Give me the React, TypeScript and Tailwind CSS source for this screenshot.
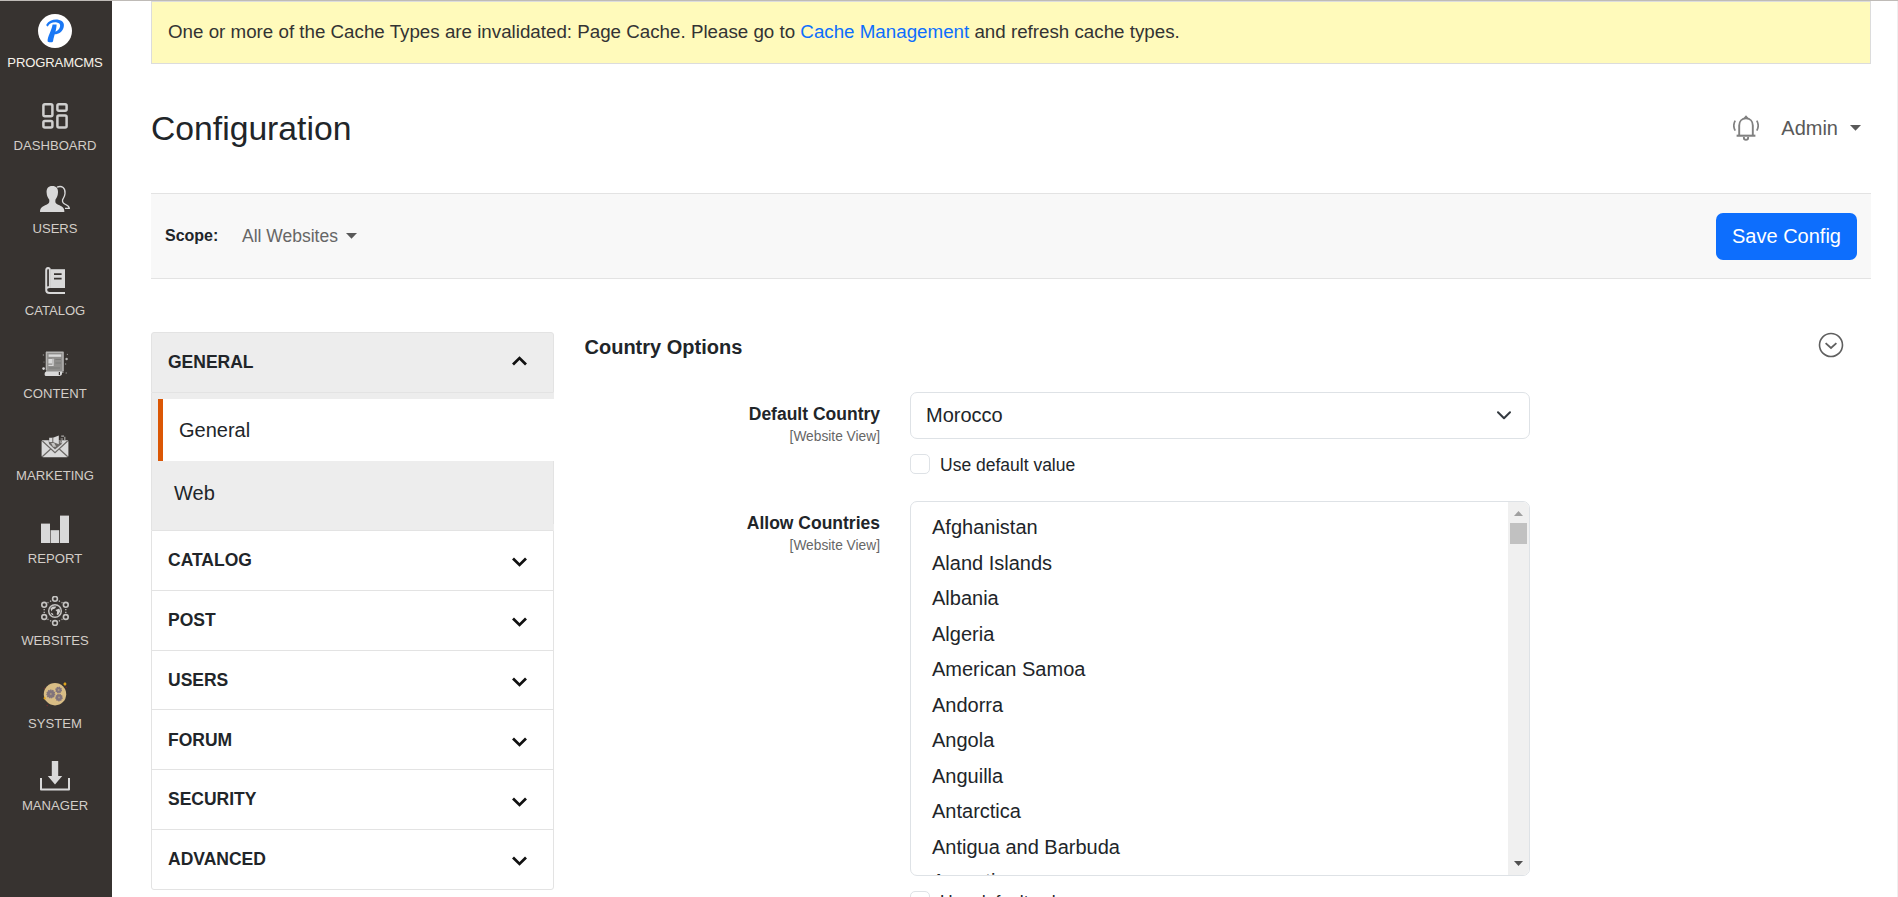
import type { ReactNode } from "react";

const ICON = "#d9d9d9";
const BAR = "#373330";

function Logo() {
  return (
    <svg width="34" height="34" viewBox="0 0 34 34">
      <circle cx="17" cy="17" r="17" fill="#fff" />
      <path
        d="M14.6 10.4H18.6C18.6 15.4 16.4 20 15 27.4C14.8 28.4 10 28.8 9.6 27.2C9.4 22.4 13.6 16.6 14.6 10.4Z"
        fill="#1a78f5"
      />
      <path
        d="M8.4 10.6C10.6 6.6 15.8 5 20.4 5.7C25 6.4 26.8 9.6 25.6 13.4C24.4 17.6 20.4 20.6 15.8 20.2L16.2 17.8C19.4 17.4 21.4 15.4 22 12.8C22.6 10.2 21.4 8.6 18.8 8.4C15 8 11.6 9 9.8 12.4C9 12.4 8 11.6 8.4 10.6Z"
        fill="#1a78f5"
      />
    </svg>
  );
}

function DashboardIcon() {
  return (
    <svg width="30" height="30" viewBox="0 0 30 30" fill="none" stroke="#cfcfce" strokeWidth="2.5">
      <rect x="3.4" y="3.2" width="9" height="12" rx="1.5" />
      <rect x="17.4" y="3.2" width="9.2" height="6.6" rx="1.5" />
      <rect x="3.4" y="20" width="9" height="6.6" rx="1.5" />
      <rect x="17.4" y="14.6" width="9.2" height="12" rx="1.5" />
    </svg>
  );
}

function UsersIcon() {
  return (
    <svg width="30" height="30" viewBox="0 0 30 30">
      <path
        d="M17 3.2C22 1 25.6 4.3 25 9.6C24.8 12.5 23.4 14.2 22.6 15.6C22 18.2 22.6 19 25 20.2C27.5 21.3 29.2 22 29.3 24.3H25"
        fill="none"
        stroke={ICON}
        strokeWidth="1.3"
      />
      <path
        d="M12.3 2C16.4 2 18.3 4.6 18 8.6C17.8 12.2 16.6 14 15.5 15.6C15.1 18.6 15.5 19.6 18.2 20.8C22 22.4 24.3 23.3 24.4 28H0C.1 23.3 2.8 22.4 6.4 20.8C9.2 19.6 9.6 18.6 9.2 15.6C8 14 6.8 12.2 6.6 8.6C6.3 4.6 8.2 2 12.3 2Z"
        fill={ICON}
      />
    </svg>
  );
}

function CatalogIcon() {
  return (
    <svg width="30" height="30" viewBox="0 0 30 30">
      <path
        d="M6.2 23.5V4.6C6.2 1.2 9.9 1.2 9.9 4.2V21C7.4 21 6.2 22.2 6.2 24C6.2 26 7.4 27.1 9.6 27.1H25"
        fill="none"
        stroke={ICON}
        strokeWidth="2"
      />
      <rect x="10.6" y="3.2" width="14.4" height="18.8" fill={ICON} />
      <path d="M14 8.2H21.6M14 12.6H21.6" stroke={BAR} strokeWidth="1.8" />
    </svg>
  );
}

function ContentIcon() {
  return (
    <svg width="30" height="30" viewBox="0 0 30 30">
      <rect x="6" y="3" width="17.5" height="21" fill="#8f8e8c" />
      <path d="M6.4 3V21M23 3V22M6 3.2H23.5" stroke="#b4b3b1" strokeWidth="1.4" />
      <rect x="8.6" y="5.4" width="12.6" height="2.4" fill={ICON} />
      <rect x="8.4" y="10" width="3.6" height="4.5" fill={ICON} />
      <path d="M13 9.8V16.4H8.4" fill="none" stroke={ICON} strokeWidth="1.3" />
      <path d="M15.4 10.5H21M15.4 14H21M9 19H20" stroke="#7b7a78" strokeWidth="1.2" />
      <path d="M4.6 25.2C4.6 23 5.6 22.6 7.6 22.6H22V24.6C22 26.6 20.4 27 19 27H6.2C5.2 27 4.6 26.4 4.6 25.2Z" fill={ICON} />
      <path d="M19.4 23V26" stroke={BAR} strokeWidth="1.2" />
      <circle cx="3.6" cy="19.6" r="1.3" fill={ICON} />
      <circle cx="26.6" cy="10" r="1.2" fill="#b5b4b2" />
      <circle cx="3.4" cy="6" r=".7" fill="#8f8e8c" />
      <circle cx="4" cy="13" r=".6" fill="#8f8e8c" />
      <circle cx="27.4" cy="5.4" r=".6" fill="#8f8e8c" />
      <circle cx="25.6" cy="15" r=".7" fill="#8f8e8c" />
      <circle cx="26.2" cy="24" r=".7" fill="#8f8e8c" />
    </svg>
  );
}

function MarketingIcon() {
  return (
    <svg width="30" height="30" viewBox="0 0 30 30">
      <rect x="1.6" y="9.3" width="26.8" height="16.9" rx="1.4" fill={ICON} />
      <path
        d="M2.4 10L15 21.6L27.6 10M2.2 25.8L11 17.8M27.8 25.8L19 17.8"
        fill="none"
        stroke="#6b6865"
        strokeWidth="1.2"
      />
      <path d="M8.6 9.2H21.8V13L15 18.4L9 13Z" fill="#6b6865" />
      <path d="M9.2 6.8H13L18.8 4.4V13.2L13 10.9H9.2Z" fill={ICON} />
      <path d="M12.8 7V11" stroke="#5d5a57" strokeWidth=".9" />
      <path d="M11.2 12H14.2L16.2 15.8H13Z" fill="#c4c3c1" />
      <path d="M21.2 5.2H24M20.6 8H23M24.8 5.8V9.2M19.8 10.6L22.4 12" stroke="#a9a8a6" strokeWidth="1.2" />
    </svg>
  );
}

function ReportIcon() {
  return (
    <svg width="30" height="30" viewBox="0 0 30 30" fill={ICON}>
      <rect x="1" y="9.6" width="9" height="19.4" />
      <rect x="10.6" y="16.2" width="8.6" height="12.8" />
      <rect x="20" y="1.6" width="9" height="27.4" />
    </svg>
  );
}

const HUB_NODES = [
  [15, 2.8],
  [25.8, 8.8],
  [25.8, 21],
  [15, 27],
  [4.2, 21],
  [4.2, 8.8],
];

function WebsitesIcon() {
  return (
    <svg width="30" height="30" viewBox="0 0 30 30" fill="none" stroke="#c4c3c1">
      <circle cx="15" cy="15" r="6.3" strokeWidth="1.5" />
      <path
        d="M10.4 12.6L12.6 10.4L16.4 10.6L15 12.6L12.4 13.4L11.6 15.4ZM15.4 14L19.4 12.4L20.2 15.6L18 19.2L16.6 18.2L17.2 15.8ZM10.6 16.6L12.8 17.4L13.6 19.6L11.8 18.8Z"
        fill="#d0cfcd"
        stroke="none"
      />
      {HUB_NODES.map(([x, y]) => (
        <circle key={`${x}-${y}`} cx={x} cy={y} r="2.4" strokeWidth="1.6" />
      ))}
      <path
        d="M18.8 4.8L20 5.5M21.6 6.4L22.4 6.9M11.2 4.8L10 5.5M8.4 6.4L7.6 6.9M18.8 25.2L20 24.5M21.6 23.6L22.4 23.1M11.2 25.2L10 24.5M8.4 23.6L7.6 23.1M4.2 13V14.2M4.2 15.8V17M25.8 13V14.2M25.8 15.8V17"
        strokeWidth="1.3"
      />
    </svg>
  );
}

function Cog({ x, y, r }: { x: number; y: number; r: number }) {
  return (
    <g>
      <circle cx={x} cy={y} r={r} fill="#81747c" stroke="#81747c" strokeWidth="1.4" strokeDasharray="1.3 .8" />
      <circle cx={x} cy={y} r="1" fill="#a9977f" />
    </g>
  );
}

function SystemIcon() {
  return (
    <svg width="30" height="30" viewBox="0 0 30 30">
      <circle cx="15" cy="15.2" r="11.2" fill="#d8bd85" />
      <Cog x={10.8} y={15} r={3.8} />
      <Cog x={18.6} y={11} r={2.7} />
      <Cog x={19} y={18.6} r={3.1} />
      <path d="M25 3L26.6 5L25 7L23.2 5Z" fill="#e0a41c" />
      <path d="M4.6 17.6L6 19.2L4.6 20.8L3.4 19.2Z" fill="#e0a41c" />
      <circle cx="26.2" cy="8.2" r=".8" fill="#6b2f2f" />
      <circle cx="7.2" cy="26.6" r=".8" fill="#6b2f2f" />
      <circle cx="4.4" cy="9.2" r=".7" fill="#6b2f2f" />
    </svg>
  );
}

function ManagerIcon() {
  return (
    <svg width="30" height="30" viewBox="0 0 30 30">
      <path d="M11.8 0H18.2V15H22.2L15 23.6L7.8 15H11.8Z" fill={ICON} />
      <path d="M1 17V28.4H29V17" fill="none" stroke={ICON} strokeWidth="2" strokeLinejoin="round" />
    </svg>
  );
}

const NAV: { label: string; icon: ReactNode }[] = [
  { label: "DASHBOARD", icon: <DashboardIcon /> },
  { label: "USERS", icon: <UsersIcon /> },
  { label: "CATALOG", icon: <CatalogIcon /> },
  { label: "CONTENT", icon: <ContentIcon /> },
  { label: "MARKETING", icon: <MarketingIcon /> },
  { label: "REPORT", icon: <ReportIcon /> },
  { label: "WEBSITES", icon: <WebsitesIcon /> },
  { label: "SYSTEM", icon: <SystemIcon /> },
  { label: "MANAGER", icon: <ManagerIcon /> },
];

function Sidebar() {
  return (
    <nav className="flex w-[112px] shrink-0 flex-col bg-[#373330] pr-0.5 text-[13.1px] text-[#d3cec8]">
      <a className="flex h-[85px] flex-col items-center pt-[13px] text-[#f7f3eb]">
        <Logo />
        <span className="mt-[5px] leading-5 tracking-[-0.15px]">PROGRAMCMS</span>
      </a>
      {NAV.map(({ label, icon }) => (
        <a key={label} className="flex h-[82.5px] flex-col items-center pt-[15px]">
          {icon}
          <span className="mt-[5px] leading-5">{label}</span>
        </a>
      ))}
    </nav>
  );
}

function Chevron({ up = false }: { up?: boolean }) {
  return (
    <svg width="15" height="10" viewBox="0 0 15 10" className={up ? "-mt-[3px]" : "mt-1"}>
      <path
        d={up ? "M1 8.4L7.5 2.1L14 8.4" : "M1 1.6L7.5 7.9L14 1.6"}
        fill="none"
        stroke="#111"
        strokeWidth="2.8"
      />
    </svg>
  );
}

function Caret() {
  return (
    <svg width="11" height="6" viewBox="0 0 11 6" fill="#595959">
      <path d="M0 0H11L5.5 5.8Z" />
    </svg>
  );
}

function Bell() {
  return (
    <svg width="26" height="26" viewBox="0 0 26 26" fill="none" stroke="#808080" strokeWidth="1.9" className="mt-px">
      <path d="M6.2 20.6V10.6C6.2 6.2 9 3.4 13 3.4C17 3.4 19.8 6.2 19.8 10.6V20.6" />
      <path d="M3.6 20.7H22.4" strokeWidth="2.1" />
      <path d="M10.9 22V23C10.9 25.4 15.1 25.4 15.1 23V22" />
      <path d="M11 3.4L13 1.2L15 3.4Z" fill="#808080" strokeWidth="1.2" />
      <path d="M2.2 5.6C.5 8.6 .5 12.6 2.2 15.6M23.8 5.6C25.5 8.6 25.5 12.6 23.8 15.6" strokeWidth="1.7" />
    </svg>
  );
}

const SECTIONS = ["CATALOG", "POST", "USERS", "FORUM", "SECURITY", "ADVANCED"];

function ConfigMenu() {
  return (
    <aside className="w-[403px] shrink-0 text-[#212529]">
      <div className="flex h-[61px] items-center justify-between rounded-t-[3px] border border-[#e3e3e3] bg-[#ededed] pl-4 pr-[26.5px] text-[17.5px] font-bold">
        GENERAL
        <Chevron up />
      </div>
      <div className="h-[137px] border-l border-[#e3e3e3] bg-[#ededed] pl-1.5 pt-1.5 text-xl">
        <div className="flex h-[62px] items-center border-l-[5px] border-[#db5705] bg-white pl-4">General</div>
        <div className="flex h-[63px] items-center border-r border-[#e3e3e3] pl-4">Web</div>
      </div>
      <div className="rounded-b-[3px] border border-[#e3e3e3]">
        {SECTIONS.map((name, i) => (
          <div
            key={name}
            className={
              "flex items-center justify-between pl-4 pr-[26.5px] text-[17.5px] font-bold " +
              (i < SECTIONS.length - 1 ? "h-[59.8px] border-b border-[#e3e3e3]" : "h-[59px]")
            }
          >
            {name}
            <Chevron />
          </div>
        ))}
      </div>
    </aside>
  );
}

function Field({ label, className, children }: { label: string; className: string; children: ReactNode }) {
  return (
    <div className={"flex gap-[30px] " + className}>
      <div className="w-[295px] pt-[11px] text-right">
        <div className="text-[17.5px] leading-[22px] font-bold">{label}</div>
        <div className="text-[13.75px] leading-6 text-[#666]">[Website View]</div>
      </div>
      <div className="w-[620px]">
        {children}
        <label className="mt-[15px] flex h-5 items-center gap-[10px] text-[17.5px] leading-[22px] whitespace-nowrap">
          <span className="size-5 rounded-[5px] border border-[#dee2e6]" />
          <span className="pt-px">Use default value</span>
        </label>
      </div>
    </div>
  );
}

const COUNTRIES = [
  "Afghanistan",
  "Aland Islands",
  "Albania",
  "Algeria",
  "American Samoa",
  "Andorra",
  "Angola",
  "Anguilla",
  "Antarctica",
  "Antigua and Barbuda",
  "Argentina",
];

function CountryList() {
  return (
    <div className="flex h-[375px] overflow-hidden rounded-[7px] border border-[#dee2e6]">
      <ul className="flex-1 pt-[7.5px] pl-[21px] text-xl">
        {COUNTRIES.map((c) => (
          <li key={c} className="flex h-[35.5px] items-center last:-mt-px">
            {c}
          </li>
        ))}
      </ul>
      <div className="flex w-[21px] flex-col items-center bg-[#f0f0f0]">
        <svg width="9" height="5" viewBox="0 0 9 5" className="mt-[9px]" fill="#a0a0a0">
          <path d="M4.5 0L9 5H0Z" />
        </svg>
        <div className="mt-[7px] h-[21px] w-[17px] bg-[#c1c1c1]" />
        <svg width="9" height="5" viewBox="0 0 9 5" className="mt-auto mb-[9px]" fill="#505050">
          <path d="M0 0H9L4.5 5Z" />
        </svg>
      </div>
    </div>
  );
}

export default function App() {
  return (
    <div className="flex h-[897px] w-full flex-col overflow-hidden border-t border-[#bfbbb7] bg-white font-['Liberation_Sans',Arial,sans-serif] text-[#212529]">
      <div className="flex min-h-0 flex-1">
        <Sidebar />
        <main className="flex min-w-0 flex-1 flex-col border-r border-[#efefef] pr-[26px] pl-[39px]">
          <div className="flex h-[63px] shrink-0 items-center border border-[#dcdcdc] bg-[#fffabb] pl-4 text-[18.75px] text-[#333]">
            <p>
              One or more of the Cache Types are invalidated: Page Cache. Please go to{" "}
              <a className="text-[#0d6efd]">Cache Management</a> and refresh cache types.
            </p>
          </div>

          <header className="flex h-[129px] shrink-0 items-center justify-between">
            <h1 className="text-[33.7px]">Configuration</h1>
            <div className="flex items-center pr-[10px] pb-0.5 text-xl text-[#595959]">
              <Bell />
              <span className="mr-3 ml-[22px]">Admin</span>
              <Caret />
            </div>
          </header>

          <div className="flex h-[86px] shrink-0 items-center border-y border-[#e3e3e3] bg-[#f8f8f8] pr-[14px] pl-[14px]">
            <span className="w-[77px] text-[16px] font-bold">Scope:</span>
            <span className="mr-2 text-[17.5px] text-[#666]">All Websites</span>
            <Caret />
            <button className="ml-auto h-[47px] w-[141px] rounded-[7px] bg-[#0d6efd] text-xl text-white">
              Save Config
            </button>
          </div>

          <div className="mt-[53px] flex gap-[31px]">
            <ConfigMenu />
            <section className="min-w-0 flex-1">
              <div className="flex h-[30px] items-center justify-between pr-[27px]">
                <h2 className="-ml-[0.5px] text-xl font-bold">Country Options</h2>
                <svg width="26" height="26" viewBox="0 0 26 26" fill="none" stroke="#5f5f5f" className="-mt-1">
                  <circle cx="13" cy="13" r="11.5" strokeWidth="1.6" />
                  <path d="M7.6 11.2L13 16L18.4 11.2" strokeWidth="1.8" />
                </svg>
              </div>
              <Field label="Default Country" className="mt-[30px]">
                <div className="flex h-[47px] items-center justify-between rounded-[7px] border border-[#dee2e6] pr-[18px] pl-[15px] text-xl">
                  <span className="pb-0.5">Morocco</span>
                  <svg width="14" height="9" viewBox="0 0 14 9" fill="none" stroke="#343a40" strokeWidth="2">
                    <path d="M1 1.2L7 7.2L13 1.2" strokeLinecap="round" strokeLinejoin="round" />
                  </svg>
                </div>
              </Field>
              <Field label="Allow Countries" className="mt-[27px]">
                <CountryList />
              </Field>
            </section>
          </div>
        </main>
      </div>
    </div>
  );
}
